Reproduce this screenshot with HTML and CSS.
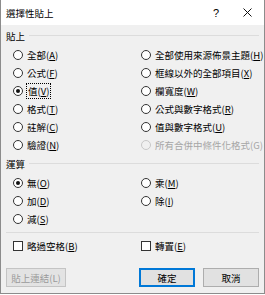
FILE: index.html
```html
<!DOCTYPE html>
<html lang="zh-Hant">
<head>
  <meta charset="UTF-8" />
  <title>選擇性貼上</title>
  <link rel="stylesheet" href="styles.css">
</head>
<body>
  <div class="window">
    <div class="titlebar">
      <span class="title">選擇性貼上</span>
      <span class="help">?</span>
      <span class="close">
        <svg width="9" height="9" viewBox="0 0 9 9"><path d="M0.5 0.5L8.5 8.5M8.5 0.5L0.5 8.5" stroke="#111" stroke-width="1"/></svg>
      </span>
    </div>

    <div class="content">
      <div class="group-head"><span>貼上</span><i class="rule"></i></div>
      <div class="options">
        <div class="opt"><span class="radio"></span>全部(<u>A</u>)</div>
        <div class="opt"><span class="radio"></span>全部使用來源佈景主題(<u>H</u>)</div>
        <div class="opt"><span class="radio"></span>公式(<u>F</u>)</div>
        <div class="opt"><span class="radio"></span>框線以外的全部項目(<u>X</u>)</div>
        <div class="opt"><span class="radio on"></span><span class="focus">值(<u>V</u>)</span></div>
        <div class="opt"><span class="radio"></span>欄寬度(<u>W</u>)</div>
        <div class="opt"><span class="radio"></span>格式(<u>T</u>)</div>
        <div class="opt"><span class="radio"></span>公式與數字格式(<u>R</u>)</div>
        <div class="opt"><span class="radio"></span>註解(<u>C</u>)</div>
        <div class="opt"><span class="radio"></span>值與數字格式(<u>U</u>)</div>
        <div class="opt"><span class="radio"></span>驗證(<u>N</u>)</div>
        <div class="opt disabled"><span class="radio"></span>所有合併中條件化格式(G)</div>
      </div>

      <div class="group-head"><span>運算</span><i class="rule"></i></div>
      <div class="options">
        <div class="opt"><span class="radio on"></span>無(<u>O</u>)</div>
        <div class="opt"><span class="radio"></span>乘(<u>M</u>)</div>
        <div class="opt"><span class="radio"></span>加(<u>D</u>)</div>
        <div class="opt"><span class="radio"></span>除(<u>I</u>)</div>
        <div class="opt"><span class="radio"></span>減(<u>S</u>)</div>
      </div>

      <div class="sep"></div>
      <div class="options">
        <div class="opt"><span class="check"></span>略過空格(<u>B</u>)</div>
        <div class="opt"><span class="check"></span>轉置(<u>E</u>)</div>
      </div>

      <div class="buttons">
        <button class="btn" disabled>貼上連結(L)</button>
        <span class="spacer"></span>
        <button class="btn default">確定</button>
        <button class="btn">取消</button>
      </div>
    </div>
  </div>
</body>
</html>
```

FILE: styles.css
```css
body {
  margin: 0;
  font-family: "Noto Sans CJK TC", "Noto Sans", sans-serif;
  font-size: 9.5px;
  color: #000;
  background: #fff;
}
.window {
  width: 265px;
  height: 294px;
  box-sizing: border-box;
  border: 1px solid #8c8c8c;
  border-top: none;
  background: #f0f0f0;
  display: flex;
  flex-direction: column;
}
.titlebar {
  height: 25px;
  flex: none;
  background: #fff;
  display: flex;
  align-items: center;
  padding-left: 5px;
}
.title {
  font-size: 9.5px;
  flex: 1;
}
.help {
  font-family: "Liberation Sans", sans-serif;
  font-size: 11px;
  width: 30px;
}
.close {
  width: 21px;
  display: flex;
}
.content {
  padding: 5px 5px 0 5px;
}
.group-head {
  display: flex;
  align-items: center;
  height: 12px;
  line-height: 12px;
}
.rule {
  flex: 1;
  height: 1px;
  background: #dcdcdc;
  margin-left: 4px;
  margin-top: -2px;
}
.options {
  display: grid;
  grid-template-columns: 128px 1fr;
  grid-auto-rows: 18px;
  padding: 4px 0 4px 7px;
}
.opt {
  display: flex;
  align-items: center;
  white-space: nowrap;
}
.opt u {
  text-underline-offset: 1px;
}
.radio {
  width: 8px;
  height: 8px;
  border: 1px solid #333;
  border-radius: 50%;
  background: #fff;
  margin-right: 4px;
  position: relative;
  flex: none;
}
.radio.on::after {
  content: "";
  position: absolute;
  left: 2px;
  top: 2px;
  width: 4px;
  height: 4px;
  border-radius: 50%;
  background: #111;
}
.disabled {
  color: #a6a6a6;
}
.disabled .radio {
  border-color: #c8c8c8;
  background: #f0f0f0;
}
.focus {
  outline: 1px dotted #000;
  outline-offset: 0;
  padding: 0 1px;
}
.check {
  width: 8px;
  height: 8px;
  border: 1px solid #333;
  background: #fff;
  margin-right: 4px;
  flex: none;
}
.sep {
  height: 1px;
  background: #dcdcdc;
  margin-top: 0;
}
.buttons {
  display: flex;
  gap: 8px;
  margin-top: 9px;
}
.spacer {
  flex: 1;
}
.btn {
  height: 19px;
  width: 56px;
  font-family: inherit;
  font-size: 9.5px;
  background: #e1e1e1;
  border: 1px solid #adadad;
  padding: 0;
  color: #000;
}
.btn[disabled] {
  width: 60px;
  background: #e3e3e3;
  border-color: #c4c4c4;
  color: #9a9a9a;
}
.btn.default {
  border: 1px solid #0078d7;
  box-shadow: inset 0 0 0 1px #0078d7;
}
```
